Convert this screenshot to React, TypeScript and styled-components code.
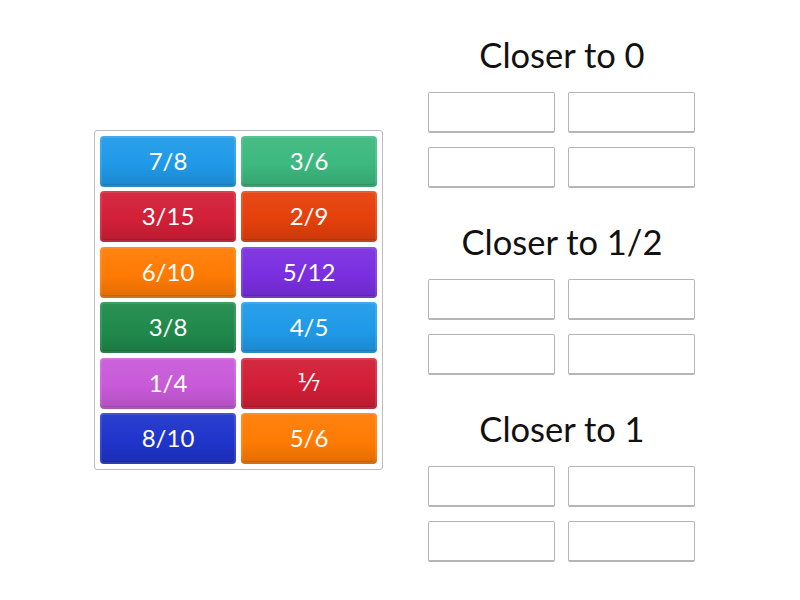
import styled, { createGlobalStyle } from "styled-components";

const GlobalStyle = createGlobalStyle`
  html, body {
    margin: 0;
    padding: 0;
    background: #fff;
  }
  body {
    font-family: Lato, "DejaVu Sans", sans-serif;
  }
`;

type Tile = { label: string; color: string };

const tiles: Tile[] = [
  { label: "7/8", color: "#1f9ae8" },
  { label: "3/6", color: "#3cb97f" },
  { label: "3/15", color: "#d31f38" },
  { label: "2/9", color: "#e5400b" },
  { label: "6/10", color: "#ff7b03" },
  { label: "5/12", color: "#7a2fe0" },
  { label: "3/8", color: "#1f8a4b" },
  { label: "4/5", color: "#1f9ae8" },
  { label: "1/4", color: "#c85ad8" },
  { label: "\u2150", color: "#d11e36" },
  { label: "8/10", color: "#1f34cb" },
  { label: "5/6", color: "#ff7b03" },
];

const groups = ["Closer to 0", "Closer to 1/2", "Closer to 1"];

const App = () => {
  return (
    <>
      <GlobalStyle />
      <Page>
        <Bank>
          {tiles.map((t, i) => (
            <TileBox key={i} $color={t.color}>
              {t.label}
            </TileBox>
          ))}
        </Bank>
        <Groups>
          {groups.map(g => (
            <Group key={g}>
              <Heading>{g}</Heading>
              <Slots>
                <Slot />
                <Slot />
                <Slot />
                <Slot />
              </Slots>
            </Group>
          ))}
        </Groups>
      </Page>
    </>
  );
};

export default App;

const Page = styled.div`
  width: 800px;
  height: 600px;
  display: flex;
  padding-left: 94px;
  gap: 45px;
  box-sizing: border-box;
`;

const Bank = styled.div`
  align-self: center;
  width: 289px;
  height: 340px;
  box-sizing: border-box;
  padding: 5px;
  border: 1px solid #bdbdbd;
  border-radius: 3px;
  display: grid;
  grid-template-columns: 136px 136px;
  grid-auto-rows: 51px;
  column-gap: 5px;
  row-gap: 4.4px;
`;

const TileBox = styled.div<{ $color: string }>`
  background-color: ${props => props.$color};
  background-image: linear-gradient(
    to bottom,
    rgba(255, 255, 255, 0.06) 0%,
    rgba(0, 0, 0, 0) 55%,
    rgba(0, 0, 0, 0.12) 100%
  );
  border-radius: 4px;
  box-shadow: inset 0 0 0 2px rgba(255, 255, 255, 0.1),
    inset 0 -3px 0 rgba(0, 0, 0, 0.1);
  color: #fff;
  font-size: 24px;
  display: flex;
  align-items: center;
  justify-content: center;
  padding-bottom: 2px;
  box-sizing: border-box;
`;

const Groups = styled.div`
  width: 268px;
  padding-top: 30px;
  display: flex;
  flex-direction: column;
  gap: 29px;
`;

const Group = styled.div`
  display: flex;
  flex-direction: column;
  gap: 12px;
`;

const Heading = styled.div`
  height: 50px;
  line-height: 50px;
  text-align: center;
  font-size: 34.5px;
  color: #111;
`;

const Slots = styled.div`
  display: grid;
  grid-template-columns: 127px 127px;
  grid-auto-rows: 41px;
  column-gap: 13px;
  row-gap: 14px;
`;

const Slot = styled.div`
  border: 1px solid #b5b5b5;
  border-bottom-width: 2px;
  border-radius: 2px;
  background: #fff;
`;
